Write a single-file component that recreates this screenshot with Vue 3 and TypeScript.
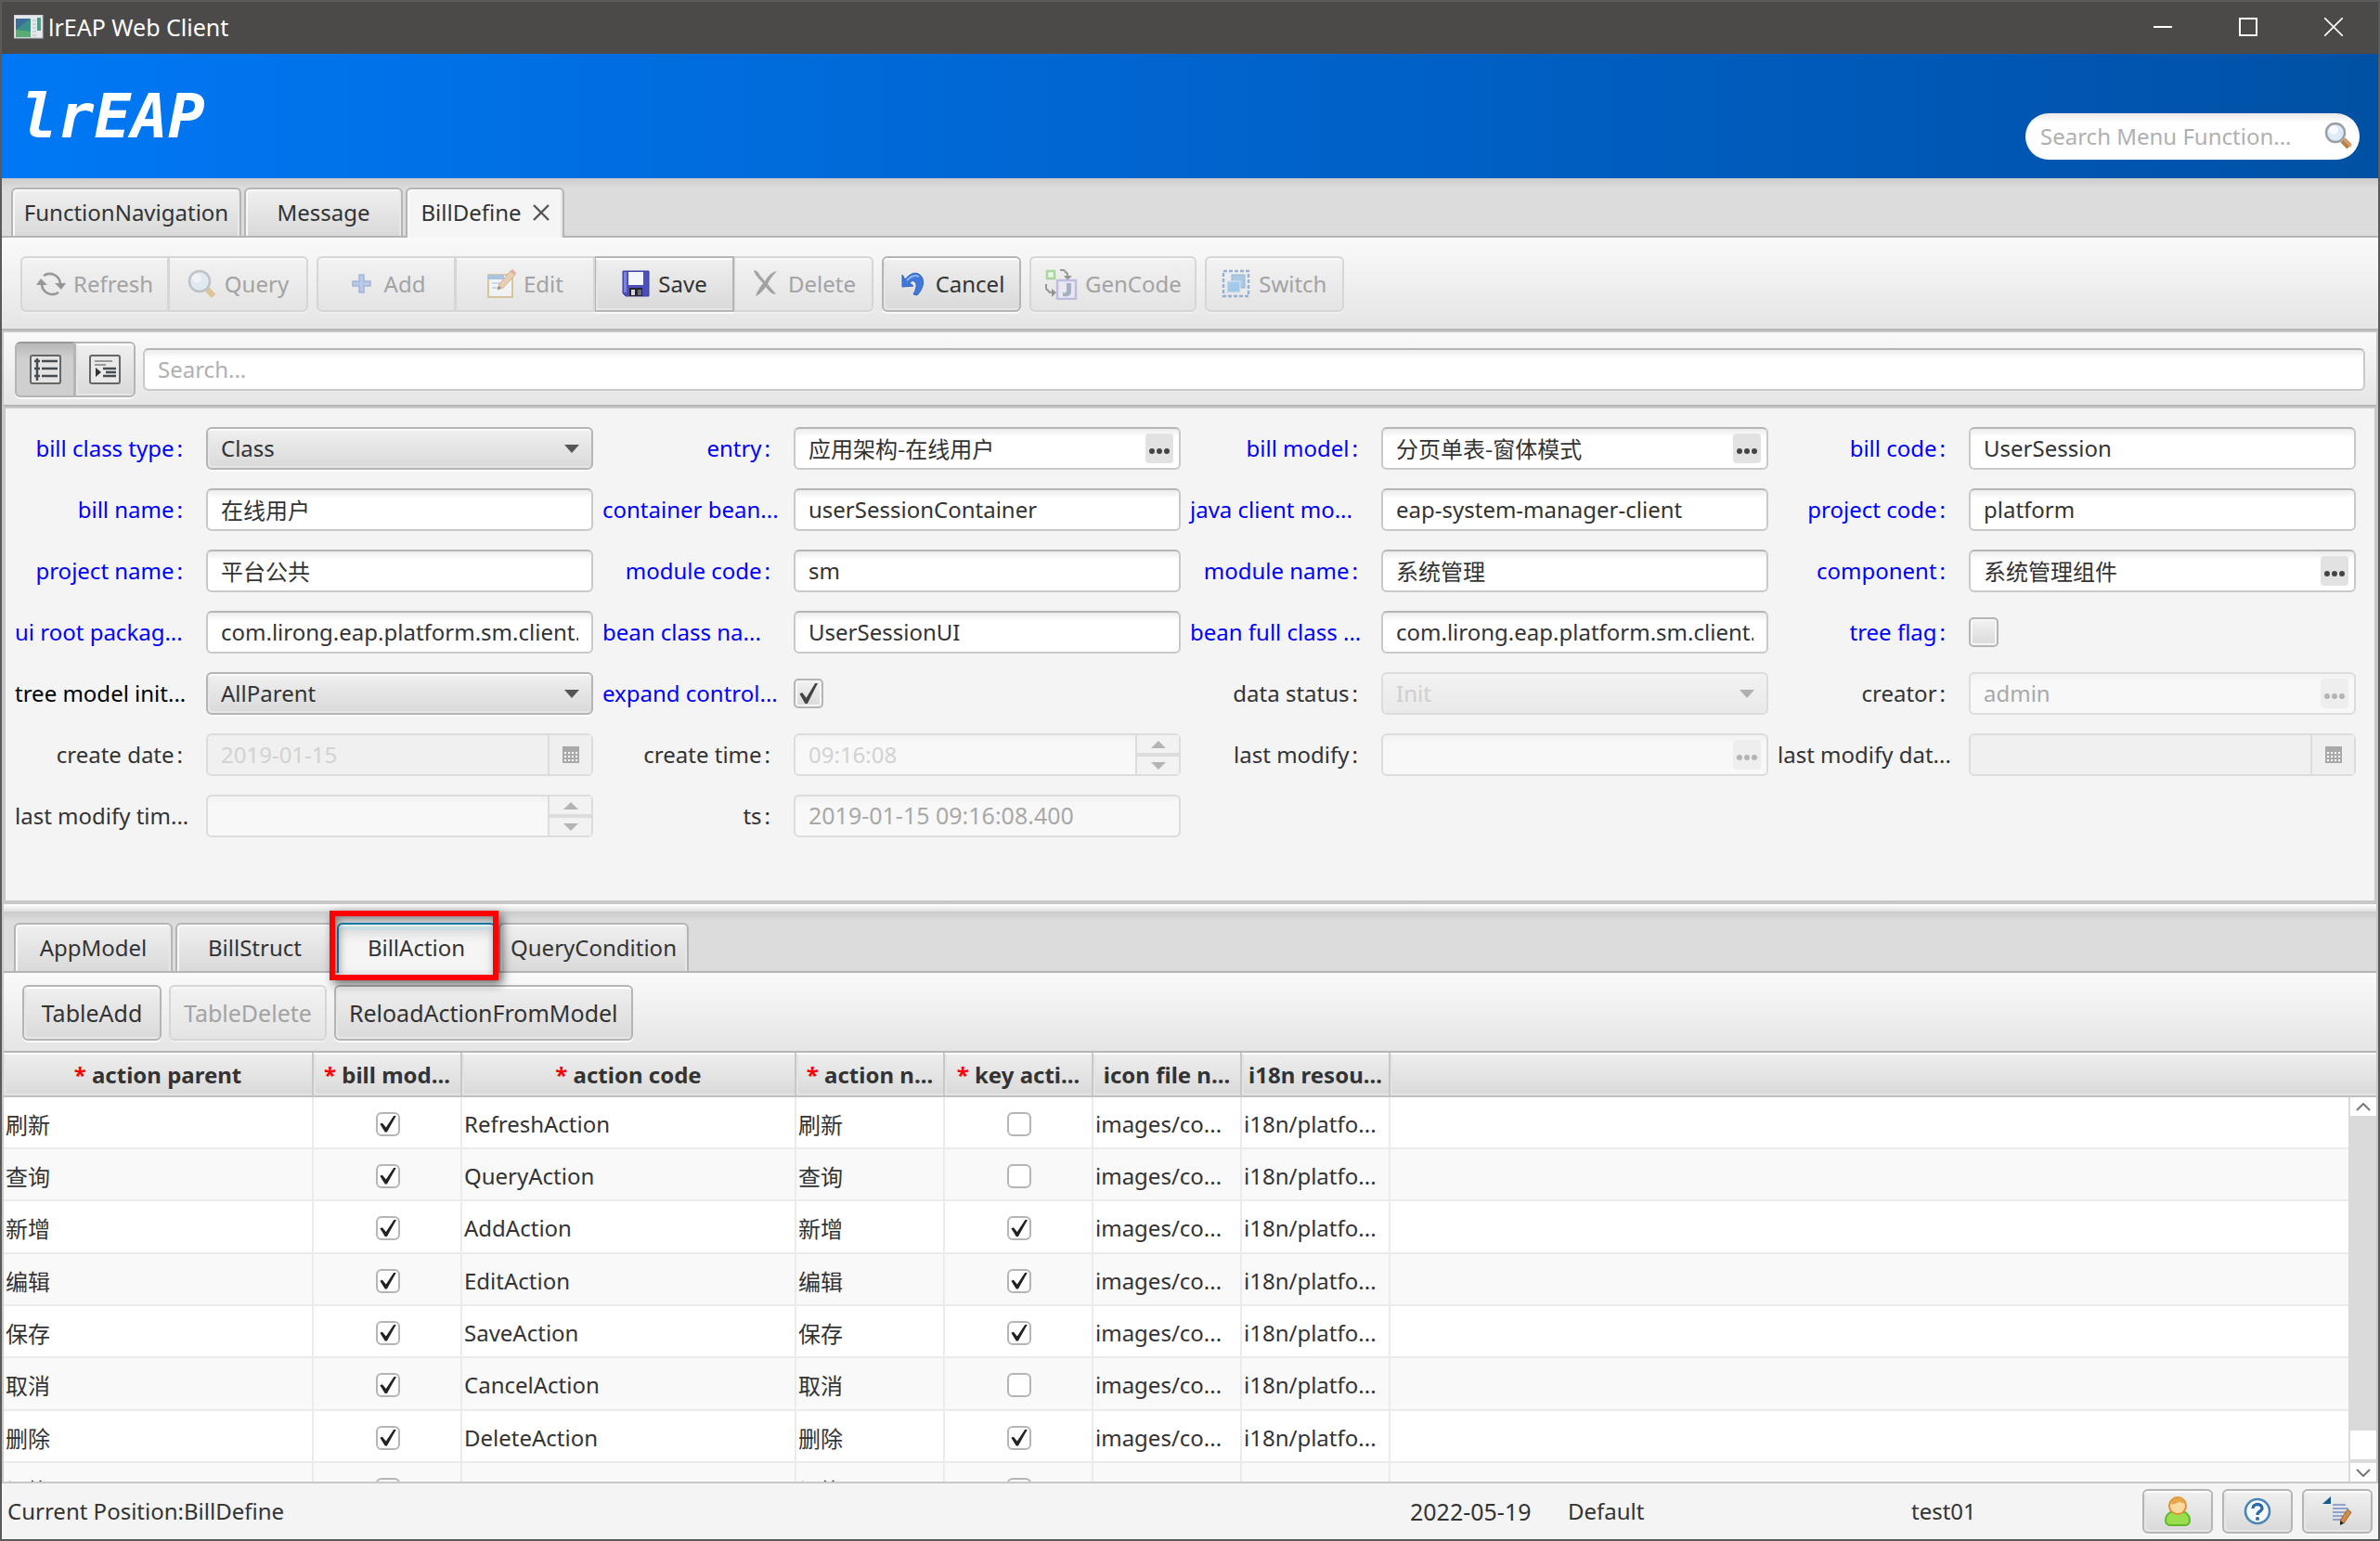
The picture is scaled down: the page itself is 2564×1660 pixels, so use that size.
<script setup lang="ts">
import { ref } from 'vue'

type Kind = 'text' | 'lookup' | 'select' | 'check' | 'day' | 'time'

interface Field {
  id: string
  label: string
  kind: Kind
  value?: string
  checked?: boolean
  disabled?: boolean
  pale?: boolean
  tone?: 'blue' | 'black'
  cut?: boolean
  cjk?: boolean
}

const fields: Field[] = [
  { id: 'classType', label: 'bill class type', kind: 'select', value: 'Class', tone: 'blue' },
  { id: 'entry', label: 'entry', kind: 'lookup', value: '应用架构-在线用户', tone: 'blue', cjk: true },
  { id: 'billModel', label: 'bill model', kind: 'lookup', value: '分页单表-窗体模式', tone: 'blue', cjk: true },
  { id: 'billCode', label: 'bill code', kind: 'text', value: 'UserSession', tone: 'blue' },
  { id: 'billName', label: 'bill name', kind: 'text', value: '在线用户', tone: 'blue', cjk: true },
  { id: 'container', label: 'container bean...', kind: 'text', value: 'userSessionContainer', tone: 'blue', cut: true },
  { id: 'javaClient', label: 'java client mo...', kind: 'text', value: 'eap-system-manager-client', tone: 'blue', cut: true },
  { id: 'projectCode', label: 'project code', kind: 'text', value: 'platform', tone: 'blue' },
  { id: 'projectName', label: 'project name', kind: 'text', value: '平台公共', tone: 'blue', cjk: true },
  { id: 'moduleCode', label: 'module code', kind: 'text', value: 'sm', tone: 'blue' },
  { id: 'moduleName', label: 'module name', kind: 'text', value: '系统管理', tone: 'blue', cjk: true },
  { id: 'component', label: 'component', kind: 'lookup', value: '系统管理组件', tone: 'blue', cjk: true },
  { id: 'uiRoot', label: 'ui root packag...', kind: 'text', value: 'com.lirong.eap.platform.sm.client.', tone: 'blue', cut: true },
  { id: 'beanClass', label: 'bean class na...', kind: 'text', value: 'UserSessionUI', tone: 'blue', cut: true },
  { id: 'beanFull', label: 'bean full class ...', kind: 'text', value: 'com.lirong.eap.platform.sm.client.', tone: 'blue', cut: true },
  { id: 'treeFlag', label: 'tree flag', kind: 'check', checked: false, tone: 'blue' },
  { id: 'treeInit', label: 'tree model init...', kind: 'select', value: 'AllParent', tone: 'black', cut: true },
  { id: 'expand', label: 'expand control...', kind: 'check', checked: true, tone: 'blue', cut: true },
  { id: 'status', label: 'data status', kind: 'select', value: 'Init', disabled: true },
  { id: 'creator', label: 'creator', kind: 'lookup', value: 'admin', disabled: true },
  { id: 'createDate', label: 'create date', kind: 'day', value: '2019-01-15', disabled: true, pale: true },
  { id: 'createTime', label: 'create time', kind: 'time', value: '09:16:08', disabled: true, pale: true },
  { id: 'lastModify', label: 'last modify', kind: 'lookup', value: '', disabled: true },
  { id: 'lastDate', label: 'last modify dat...', kind: 'day', value: '', disabled: true, cut: true },
  { id: 'lastTime', label: 'last modify tim...', kind: 'time', value: '', disabled: true, cut: true },
  { id: 'ts', label: 'ts', kind: 'text', value: '2019-01-15 09:16:08.400', disabled: true },
]

const columns = [
  { title: 'action parent', required: true },
  { title: 'bill mod...', required: true },
  { title: 'action code', required: true },
  { title: 'action n...', required: true },
  { title: 'key acti...', required: true },
  { title: 'icon file n...', required: false },
  { title: 'i18n resou...', required: false },
]

const rows = ref([
  { name: '刷新', code: 'RefreshAction', model: true, key: false },
  { name: '查询', code: 'QueryAction', model: true, key: false },
  { name: '新增', code: 'AddAction', model: true, key: true },
  { name: '编辑', code: 'EditAction', model: true, key: true },
  { name: '保存', code: 'SaveAction', model: true, key: true },
  { name: '取消', code: 'CancelAction', model: true, key: false },
  { name: '删除', code: 'DeleteAction', model: true, key: true },
  { name: '切换', code: 'SwitchAction', model: false, key: false },
])

const detailTabs = ['AppModel', 'BillStruct', 'BillAction', 'QueryCondition']
const detailTab = ref('BillAction')
</script>

<template>
  <div class="window">
    <header class="titlebar">
      <svg class="app-icon" width="32" height="26" viewBox="0 0 32 26">
        <rect x="0" y="0" width="31" height="25" fill="#e6e9ec" stroke="#b9bfc4" />
        <rect x="2" y="4" width="16" height="20" fill="#3c8f86" />
        <path d="M2 4h16L2 16z" fill="#3a6f9c" />
        <path d="M2 24h16v-6L2 16z" fill="#5bab74" />
        <rect x="25" y="3" width="4" height="14" fill="#4a9c86" />
        <path d="M20 6h4M20 10h4M20 14h4M20 18h4M20 22h4" stroke="#b4bac0" stroke-width="1" />
      </svg>
      <span class="title">lrEAP Web Client</span>
      <div class="controls">
        <button aria-label="Minimize"><svg width="20" height="20"><path d="M0 10h20" stroke="#fff" stroke-width="2" /></svg></button>
        <button aria-label="Maximize"><svg width="20" height="20"><rect x="1" y="1" width="18" height="18" fill="none" stroke="#fff" stroke-width="2" /></svg></button>
        <button aria-label="Close"><svg width="20" height="20"><path d="M0 0l20 20M20 0L0 20" stroke="#fff" stroke-width="1.6" /></svg></button>
      </div>
    </header>

    <div class="banner">
      <h1 class="logo">lrEAP</h1>
      <div class="menu-search">
        <input type="text" placeholder="Search Menu Function..." aria-label="Search Menu Function" />
        <svg width="32" height="32" viewBox="0 0 32 32">
          <path d="M20 20l7 7" stroke="#b9804a" stroke-width="7" />
          <path d="M21 19l8 8" stroke="#dba571" stroke-width="2" />
          <circle cx="12" cy="12" r="10" fill="#dceafa" stroke="#9c9ea3" stroke-width="2.4" />
          <circle cx="10" cy="9" r="5" fill="#fff" opacity=".8" />
        </svg>
      </div>
    </div>

    <div class="tabs main-tabs" role="tablist">
      <button class="tab wide" role="tab">FunctionNavigation</button>
      <button class="tab" role="tab">Message</button>
      <div class="tab active closable" role="tab" aria-selected="true">
        BillDefine
        <button class="tab-close" aria-label="Close tab"><svg width="18" height="18"><path d="M1 1l16 16M17 1L1 17" stroke="#555" stroke-width="2.4" /></svg></button>
      </div>
    </div>

    <div class="toolbar">
      <div class="group">
        <button class="btn refresh" disabled>
          <svg width="32" height="32" viewBox="0 0 32 32" fill="none" stroke="#333" stroke-width="2.6">
            <path d="M8 7a11.500 11.500 0 0 1 18 9M24 25a11.500 11.500 0 0 1-18-9" />
            <path d="M20 15h12l-5 7zM12 17H0l5-7z" fill="#333" stroke="none" />
          </svg>Refresh
        </button>
        <button class="btn" disabled>
          <svg width="32" height="32" viewBox="0 0 32 32">
            <path d="M20 20l8 9" stroke="#c89a2c" stroke-width="6" />
            <circle cx="13" cy="13" r="11" fill="#d4e6f8" stroke="#8d9097" stroke-width="2.4" />
            <circle cx="10" cy="10" r="5" fill="#fff" opacity=".8" />
          </svg>Query
        </button>
      </div>
      <div class="group">
        <button class="btn" disabled>
          <svg width="32" height="32" viewBox="0 0 32 32">
            <path d="M13 6h5v7h7v5h-7v7h-5v-7H6v-5h7z" fill="#7fa0e2" stroke="#4b70c4" stroke-width="1.4" />
          </svg>Add
        </button>
        <button class="btn" disabled>
          <svg width="32" height="32" viewBox="0 0 32 32">
            <rect x="2" y="6" width="26" height="24" fill="#fbfdff" stroke="#c09a3c" stroke-width="2" />
            <path d="M1 6h18v5H1z" fill="#5b93cf" />
            <path d="M6 15h9M6 20h7" stroke="#9ec5ea" stroke-width="2" />
            <path d="M12 22l2-6L26 2l5 4-13 14z" fill="#e8ab68" stroke="#a46a34" stroke-width="1" />
            <path d="M26 2l2-2 4 4-1 2z" fill="#d8574c" />
            <path d="M12 22l1-4 3 2z" fill="#222" />
          </svg>Edit
        </button>
        <button class="btn">
          <svg width="32" height="32" viewBox="0 0 32 32">
            <path d="M2 2h28v27H5l-3-3z" fill="#4d50bb" stroke="#3b3c9c" stroke-width="1" />
            <rect x="8" y="3" width="16" height="14" fill="#f3f7ff" />
            <path d="M3 3h3v22H3z" fill="#7b83e0" />
            <rect x="9" y="20" width="14" height="9" fill="#26262e" />
            <path d="M11 22h4v6h-4z" fill="#d4d6de" />
            <path d="M18 22h4v6h-4z" fill="#6b6d79" />
          </svg>Save
        </button>
        <button class="btn" disabled>
          <svg width="32" height="32" viewBox="0 0 32 32">
            <path d="M3 1c3 0 5 2 7 6l5 6C18 8 22 3 28 2c-4 4-8 9-10 14 3 4 7 8 9 11-5 0-8-4-11-8-3 4-6 8-11 10 2-6 5-10 8-14C9 10 5 8 3 1z" fill="#4c4c4c" />
          </svg>Delete
        </button>
      </div>
      <button class="btn single">
        <svg width="32" height="32" viewBox="0 0 32 32">
          <path d="M4 6l3 5c5-6 11-9 16-5 6 5 4 15-3 22l-4-1c4-7 4-12 1-14-2-1-4 0-5 2l4 3-12 1z" fill="#4079d9" stroke="#2f62c0" stroke-width="1" />
          <path d="M9 12c5-5 9-6 13-4" fill="none" stroke="#8fb6f4" stroke-width="2" />
        </svg>Cancel
      </button>
      <button class="btn single gen" disabled>
        <svg width="36" height="34" viewBox="0 0 36 34">
          <rect x="3" y="3" width="8" height="8" fill="#effae8" stroke="#4fc43a" stroke-width="2.6" />
          <path d="M17 2h4l4 4v4M2 17v5l4 4h4" fill="none" stroke="#333" stroke-width="2" />
          <path d="M21 8h9l-5 5zM8 22v9l5-5z" fill="#333" />
          <rect x="14" y="13" width="20" height="20" fill="#e8e6fa" stroke="#8d86d8" stroke-width="2.4" />
          <path d="M24 16h5v9c0 4-3 6-9 5v-4c3 1 4 0 4-2z" fill="#4b7097" />
        </svg>GenCode
      </button>
      <button class="btn single" disabled>
        <svg width="32" height="32" viewBox="0 0 32 32">
          <rect x="2" y="2" width="27" height="27" fill="none" stroke="#3767b8" stroke-width="2.4" stroke-dasharray="4 2" />
          <rect x="11" y="6" width="14" height="14" fill="#5b9fdc" stroke="#2d74b8" />
          <rect x="6" y="13" width="14" height="12" fill="#4ca3e8" stroke="#cfe4f7" />
        </svg>Switch
      </button>
    </div>

    <main class="work">
      <div class="search-bar">
        <div class="group">
          <button class="btn toggle on" aria-label="Card view">
            <svg width="34" height="32" viewBox="0 0 34 32">
              <rect x="1" y="1" width="32" height="30" rx="2" fill="#e4e4e4" stroke="#666" stroke-width="2" />
              <path d="M8 4v24M5 7h6M5 15h6M5 23h6" stroke="#444c52" stroke-width="2.400" />
              <path d="M13 7h17M13 15h17M13 23h17" stroke="#444c52" stroke-width="2.6" />
            </svg>
          </button>
          <button class="btn toggle" aria-label="List view">
            <svg width="34" height="32" viewBox="0 0 34 32">
              <rect x="1" y="1" width="32" height="30" rx="2" fill="#e9e9e9" stroke="#666" stroke-width="2" />
              <path d="M6 7h19M6 11h12" stroke="#999" stroke-width="2.2" />
              <path d="M15 15h14M18 19h11M15 23h14" stroke="#444c52" stroke-width="2.4" />
              <path d="M7 14l6 5-6 5z" fill="#333" />
            </svg>
          </button>
        </div>
        <input class="box search" type="text" placeholder="Search..." aria-label="Search" />
      </div>

      <form class="panel" @submit.prevent>
        <div v-for="f in fields" :key="f.id" class="field">
          <label :for="f.id" :class="['label', f.tone, { cut: f.cut }]">{{ f.label }}<span v-if="!f.cut" class="colon">:</span></label>

          <input v-if="f.kind === 'check'" :id="f.id" type="checkbox" class="check" :checked="f.checked" />

          <div v-else-if="f.kind === 'select'" class="control">
            <select :id="f.id" class="box pick" :disabled="f.disabled">
              <option>{{ f.value }}</option>
            </select>
            <svg class="arrow" :class="{ dim: f.disabled }" width="16" height="9"><path d="M0 0h16L8 9z" fill="#555" /></svg>
          </div>

          <div v-else class="control">
            <input
              :id="f.id"
              type="text"
              :class="['box', f.kind, { cjk: f.cjk, pale: f.pale }]"
              :value="f.value"
              :disabled="f.disabled"
            />
            <button v-if="f.kind === 'lookup'" type="button" class="dots" :disabled="f.disabled" :aria-label="'Choose ' + f.label">
              <svg width="24" height="8"><circle cx="4" cy="4" r="3" /><circle cx="12" cy="4" r="3" /><circle cx="20" cy="4" r="3" /></svg>
            </button>
            <button v-if="f.kind === 'day'" type="button" class="side" disabled aria-label="Pick a date">
              <svg width="18" height="18">
                <path d="M0 0h18v18H0z" fill="#a9a9a9" />
                <path d="M2 7h14M2 11h14M2 15h14" stroke="#fff" stroke-width="2" stroke-dasharray="2 2" />
              </svg>
            </button>
            <div v-if="f.kind === 'time'" class="side spin">
              <button type="button" disabled aria-label="Increase"><svg width="16" height="8"><path d="M0 8h16L8 0z" fill="#b4b4b4" /></svg></button>
              <button type="button" disabled aria-label="Decrease"><svg width="16" height="8"><path d="M0 0h16L8 8z" fill="#b4b4b4" /></svg></button>
            </div>
          </div>
        </div>
      </form>

      <div class="splitter"></div>

      <div class="tabs detail-tabs" role="tablist">
        <div v-for="t in detailTabs" :key="t" class="tab-slot">
          <button class="tab" :class="{ active: t === detailTab, focus: t === detailTab, long: t === 'QueryCondition' }" role="tab" :aria-selected="t === detailTab" @click="detailTab = t">{{ t }}</button>
          <span v-if="t === detailTab" class="marker"></span>
        </div>
      </div>

      <div class="toolbar detail-bar">
        <button class="btn single">TableAdd</button>
        <button class="btn single" disabled>TableDelete</button>
        <button class="btn single">ReloadActionFromModel</button>
      </div>

      <div class="grid">
        <table>
          <colgroup>
            <col class="c-parent" /><col class="c-std" /><col class="c-code" />
            <col class="c-std" /><col class="c-std" /><col class="c-std" /><col class="c-std" /><col />
          </colgroup>
          <thead>
            <tr>
              <th v-for="c in columns" :key="c.title"><span v-if="c.required" class="star">* </span>{{ c.title }}</th>
              <th></th>
            </tr>
          </thead>
          <tbody>
            <tr v-for="r in rows" :key="r.code">
              <td class="cjk">{{ r.name }}</td>
              <td><input v-model="r.model" type="checkbox" class="tick" aria-label="bill model" /></td>
              <td>{{ r.code }}</td>
              <td class="cjk">{{ r.name }}</td>
              <td><input v-model="r.key" type="checkbox" class="tick" aria-label="key action" /></td>
              <td>images/co...</td>
              <td>i18n/platfo...</td>
              <td></td>
            </tr>
          </tbody>
        </table>
        <div class="scrollbar">
          <button aria-label="Scroll up"><svg width="16" height="9"><path d="M1 8l7-7 7 7" fill="none" stroke="#777" stroke-width="2" /></svg></button>
          <div class="thumb"></div>
          <div class="track"></div>
          <button aria-label="Scroll down"><svg width="16" height="9"><path d="M1 1l7 7 7-7" fill="none" stroke="#777" stroke-width="2" /></svg></button>
        </div>
      </div>
    </main>

    <footer class="status">
      <span class="position">Current Position:BillDefine</span>
      <span class="today">2022-05-19</span>
      <span class="mode">Default</span>
      <span class="user">test01</span>
      <div class="status-buttons">
        <button class="btn single" aria-label="User">
          <svg width="28" height="32" viewBox="0 0 28 32">
            <path d="M6 17h16c3 2 5 5 5 9 0 3-1 4-4 5H5c-3-1-4-2-4-5 0-4 2-7 5-9z" fill="#9ade4f" stroke="#62b82c" stroke-width="2" />
            <circle cx="14" cy="10" r="9" fill="#fbd9a0" stroke="#dc9430" stroke-width="2" />
            <path d="M6 8c1-5 5-7 9-6 4 0 7 3 7 6-3-1-4-2-7-2-3 2-6 3-9 2z" fill="#e8a64c" />
          </svg>
        </button>
        <button class="btn single" aria-label="Help">
          <svg width="30" height="30" viewBox="0 0 30 30">
            <circle cx="15" cy="15" r="13" fill="#f6fbff" stroke="#4a86b5" stroke-width="2.6" />
            <path d="M10 12c0-6 10-6 10 0 0 3-5 3-5 7" fill="none" stroke="#2f6ba3" stroke-width="3.4" />
            <circle cx="15" cy="23" r="2" fill="#2f6ba3" />
          </svg>
        </button>
        <button class="btn single" aria-label="Log">
          <svg width="32" height="32" viewBox="0 0 32 32">
            <path d="M0 8l9-8v8z" fill="#175a8c" />
            <path d="M11 9h14M11 13h17M11 17h14M11 21h11M11 25h9" stroke="#8fa3cf" stroke-width="2" />
            <path d="M27 14l4 3-8 12-4-3z" fill="#d08b48" stroke="#a3632a" stroke-width="1" />
            <path d="M19 26l4 3-4 2z" fill="#222" />
          </svg>
        </button>
      </div>
    </footer>
  </div>
</template>

<style>
body {
  margin: 0;
  overflow: hidden;
}
</style>

<style scoped>
* {
  box-sizing: border-box;
}
.window {
  display: flex;
  flex-direction: column;
  height: 100vh;
  border: 2px solid #5a5a5a;
  background: #f4f4f4;
  color: #333;
  font: 24px/32px 'Noto Sans', 'Noto Sans CJK SC', sans-serif;
}
button,
input,
select {
  font: inherit;
  color: inherit;
}
button {
  margin: 0;
  padding: 0;
  border: 0;
  background: none;
}
svg {
  display: block;
  flex: none;
}

.titlebar {
  display: flex;
  flex: none;
  align-items: center;
  height: 56px;
  padding: 0 2px 2px 13px;
  background: #4c4a48;
  color: #fff;
}
.title {
  flex: 1;
  padding-left: 5px;
  font-size: 25px;
}
.controls {
  display: flex;
}
.controls button {
  display: grid;
  place-items: center;
  width: 92px;
  height: 54px;
}

.banner {
  display: flex;
  flex: none;
  align-items: flex-end;
  justify-content: space-between;
  height: 134px;
  padding: 0 20px 20px;
  background: linear-gradient(90deg, #0078f5, #0054ad 92%, #0051a3);
}
.logo {
  margin: 0 0 10px;
  color: #fff;
  font: italic bold 66px/72px 'DejaVu Sans Mono', monospace;
}
.menu-search {
  display: flex;
  align-items: center;
  width: 360px;
  height: 50px;
  padding: 0 6px 0 16px;
  border-radius: 25px;
  background: linear-gradient(#e8e8e8, #fff 10px);
}
.menu-search input {
  flex: 1;
  min-width: 0;
  padding: 0;
  border: 0;
  outline: 0;
  background: none;
}
input::placeholder {
  color: #b0b0b0;
  opacity: 1;
}

.tabs {
  display: flex;
  flex: none;
  align-items: flex-end;
  gap: 3px;
  border-bottom: 2px solid #b5b5b5;
  background: linear-gradient(#cbcbcb, #dcdcdc 10px);
}
.main-tabs {
  height: 64px;
  padding-left: 10px;
}
.tab {
  width: 171px;
  height: 52px;
  border: 2px solid #b5b5b5;
  border-bottom: 0;
  border-radius: 6px 6px 0 0;
  background: linear-gradient(#f0f0f0, #d9d9d9);
  box-shadow: inset 2px 2px 0 #f8f8f8, inset -2px 0 0 #e8e8e8;
  text-align: center;
  white-space: nowrap;
}
.wide {
  width: 248px;
}
.long {
  width: 205px;
}
.tab.active {
  height: 54px;
  margin-bottom: -2px;
  padding-bottom: 2px;
  background: #f5f5f5;
}
.closable {
  display: flex;
  align-items: center;
  justify-content: center;
  gap: 12px;
}
.tab-slot {
  position: relative;
  display: flex;
}
.tab.focus {
  border-color: #1781ae;
  box-shadow: inset 0 2px 0 #f5f5f5, inset 0 6px 0 #cbdde4, inset 0 10px 12px #d8d8d8;
}
.marker {
  position: absolute;
  z-index: 1;
  top: -13px;
  left: -8px;
  width: 182px;
  height: 75px;
  border: 6px solid #f00;
  box-shadow: 4px 4px 10px rgba(0, 0, 0, 0.6), inset 3px 3px 10px rgba(0, 0, 0, 0.4);
  pointer-events: none;
}

.toolbar {
  display: flex;
  flex: none;
  gap: 9px;
  padding: 20px 20px 18px;
  border-bottom: 2px solid #b5b5b5;
  background: linear-gradient(#fafafa, #e5e5e5);
}
.group {
  display: flex;
}
.btn {
  display: flex;
  align-items: center;
  justify-content: center;
  gap: 8px;
  width: 150px;
  height: 60px;
  border: 2px solid #b5b5b5;
  background: linear-gradient(#f0f0f0, #d9d9d9);
  box-shadow: inset 0 2px 0 #fff, inset 2px -2px 0 #e6e6e6, 0 2px 0 #fafafa;
  white-space: nowrap;
}
.btn.refresh {
  width: 160px;
}
.group .btn + .btn {
  border-left-width: 1px;
}
.group .btn:first-child {
  border-radius: 6px 0 0 6px;
}
.group .btn:last-child {
  border-radius: 0 6px 6px 0;
}
.btn.single {
  width: auto;
  min-width: 150px;
  padding: 0 14px;
  border-radius: 6px;
}
.btn.gen {
  min-width: 179px;
}
.btn:disabled {
  border-color: #d6d6d6;
  background: linear-gradient(#f2f2f2, #e4e4e4);
  box-shadow: inset 0 2px 0 #f8f8f8, 0 2px 0 #f0f0f0;
  color: #a3a3a3;
}
.btn:disabled svg {
  opacity: 0.45;
}

.work {
  display: flex;
  flex: 1;
  flex-direction: column;
  min-height: 0;
  border: solid #c8c8c8;
  border-width: 2px 2px 0;
}
.search-bar {
  display: flex;
  flex: none;
  align-items: center;
  gap: 8px;
  padding: 10px 12px 8px;
  border-bottom: 2px solid #b5b5b5;
  background: linear-gradient(#fafafa, #e5e5e5);
}
.toggle {
  width: 65px;
}
.toggle.on {
  border-color: #999 #b5b5b5 #b5b5b5;
  background: linear-gradient(#b8b8b8, #cfcfcf 16px);
  box-shadow: 0 2px 0 #fafafa;
}
.box {
  width: 100%;
  height: 46px;
  padding: 0 14px 2px;
  border: 2px solid #c9c9c9;
  border-top-color: #b5b5b5;
  border-radius: 6px;
  outline: 0;
  background: linear-gradient(#ececec, #fff 9px);
}
.search {
  flex: 1;
}

.panel {
  display: grid;
  flex: none;
  grid-template-columns: repeat(4, minmax(0, 1fr));
  gap: 20px 10px;
  padding: 20px 20px 68px 10px;
  border: solid #c8c8c8;
  border-width: 2px 2px 4px;
  background: #f4f4f4;
}
.field {
  display: flex;
  align-items: center;
  height: 46px;
}
.label {
  flex: none;
  width: 206px;
  padding-right: 25px;
  text-align: right;
  white-space: nowrap;
}
.label.cut {
  padding-right: 0;
  text-align: left;
}
.blue {
  color: #00f;
}
.black {
  color: #000;
}
.colon {
  margin-left: 3px;
}
.control {
  position: relative;
  flex: 1;
  min-width: 0;
}
.box.cjk,
td.cjk {
  font-family: 'Noto Sans CJK SC', sans-serif;
}
.box.lookup {
  padding-right: 44px;
}
.box.day,
.box.time {
  padding-right: 54px;
}
.pick {
  appearance: none;
  padding-bottom: 0;
  border-color: #b5b5b5;
  background: linear-gradient(#f0f0f0, #d9d9d9);
  box-shadow: inset 0 2px 0 #fbfbfb, inset 2px -2px 0 #e6e6e6, 0 2px 0 #fbfbfb;
  opacity: 1;
}
.box:disabled {
  border-color: #dcdcdc;
  background: linear-gradient(#f2f2f2, #f8f8f8 9px);
  color: #a9a9a9;
}
.pick:disabled {
  background: linear-gradient(#f2f2f2, #e9e9e9);
  box-shadow: none;
  color: #cfcfcf;
}
.box.day:disabled {
  background: #f0f0f0;
}
.box.pale:disabled {
  color: #d2d2d2;
}
#ts {
  font-size: 25px;
}
.arrow {
  position: absolute;
  top: 19px;
  right: 15px;
  pointer-events: none;
}
.dim {
  opacity: 0.4;
}
.dots {
  position: absolute;
  top: 7px;
  right: 8px;
  display: grid;
  place-items: center;
  width: 30px;
  height: 32px;
  padding-top: 6px;
  border-radius: 4px;
  background: #e2e2e2;
  fill: #444;
}
.dots:disabled {
  background: #eee;
  fill: #b4b4b4;
}
.side {
  position: absolute;
  top: 2px;
  right: 2px;
  bottom: 2px;
  display: grid;
  place-items: center;
  width: 47px;
  border-left: 2px solid #dcdcdc;
  background: #efefef;
}
.spin {
  gap: 4px;
  background: #dcdcdc;
}
.spin button {
  display: grid;
  place-items: center;
  width: 100%;
  height: 19px;
  background: #f2f2f2;
}
.check {
  appearance: none;
  display: grid;
  place-items: center;
  width: 32px;
  height: 32px;
  margin: 0;
  border: 2px solid #b5b5b5;
  border-radius: 5px;
  background: linear-gradient(#f2f2f2, #dadada);
  box-shadow: inset 0 0 0 2px #f6f6f6;
}
.check:checked::after,
.tick:checked::after {
  content: '';
  width: 20px;
  height: 22px;
  background: #444;
  clip-path: polygon(2% 52%, 16% 46%, 38% 72%, 86% 0, 100% 0, 44% 100%, 32% 100%);
}

.splitter {
  flex: none;
  height: 8px;
  background: linear-gradient(#fff, #dedede);
}
.detail-tabs {
  height: 66px;
  padding-left: 11px;
}
.detail-tabs .tab-slot:has(.active) {
  margin-bottom: -2px;
}
.detail-tabs .tab.active {
  margin-bottom: 0;
}
.detail-bar {
  gap: 8px;
  padding: 13px 20px 11px;
}
.detail-bar .btn {
  padding: 0 14px;
  font-size: 25px;
}

.grid {
  position: relative;
  flex: 1;
  min-height: 0;
  overflow: hidden;
  background: #fff;
}
table {
  width: 100%;
  border-spacing: 0;
  table-layout: fixed;
}
.c-parent {
  width: 334px;
}
.c-std {
  width: 160px;
}
.c-code {
  width: 360px;
}
th {
  height: 48px;
  padding: 2px 0 0;
  border-right: 2px solid #c8c8c8;
  border-bottom: 2px solid #c0c0c0;
  background: linear-gradient(#efefef, #d9d9d9);
  box-shadow: inset 0 2px 0 #fff, inset 2px -2px 0 #e4e4e4;
  overflow: hidden;
  white-space: nowrap;
}
th:last-child,
td:last-child {
  border-right: 0;
}
.star {
  color: #f00;
}
td {
  height: 56px;
  padding: 3px 0 0 2px;
  border-right: 2px solid #ebebeb;
  border-bottom: 2px solid #ebebeb;
  overflow: hidden;
  white-space: nowrap;
}
tbody tr:nth-child(3n) td {
  height: 57px;
}
tbody tr:nth-child(even) {
  background: #f9f9f9;
}
.tick {
  appearance: none;
  display: grid;
  place-items: center;
  width: 26px;
  height: 26px;
  margin: 0 auto;
  border: 2px solid #b5b5b5;
  border-radius: 6px;
  background: #fff;
}
.tick:checked::after {
  width: 18px;
  height: 18px;
  background: #222;
}
.scrollbar {
  position: absolute;
  top: 48px;
  right: 0;
  bottom: 0;
  display: flex;
  flex-direction: column;
  width: 30px;
  padding-left: 2px;
  background: #dadada;
}
.scrollbar button {
  display: grid;
  place-items: center;
  height: 20px;
  background: #fff;
}
.thumb {
  flex: 1;
}
.track {
  height: 31px;
  margin-bottom: 4px;
  background: #fff;
}

.status {
  display: flex;
  flex: none;
  align-items: center;
  height: 62px;
  padding: 0 6px;
  border-top: 2px solid #c8c8c8;
}
.position {
  flex: 1;
}
.today {
  width: 170px;
  font-size: 25px;
}
.mode {
  width: 370px;
}
.user {
  width: 249px;
}
.status-buttons {
  display: flex;
  gap: 10px;
}
.status-buttons .btn {
  width: 76px;
  min-width: 0;
  height: 48px;
}
</style>
